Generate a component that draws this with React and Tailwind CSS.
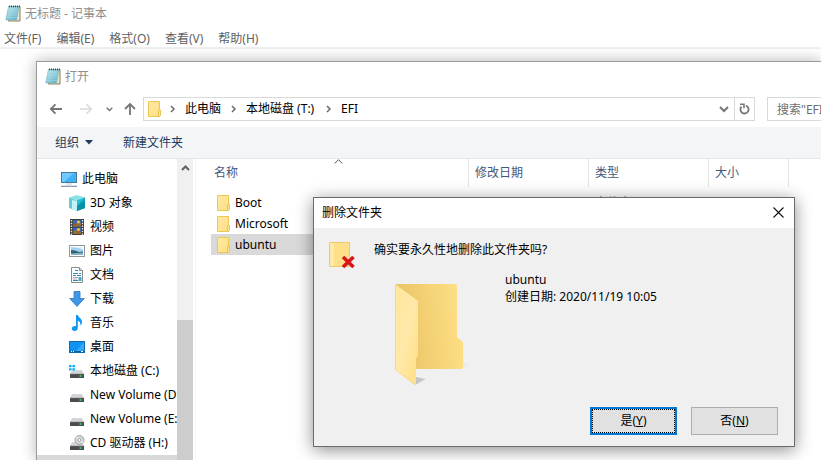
import React from "react";

function NotepadIcon() {
  return (
    <svg width="16" height="17" viewBox="0 0 16 17" className="shrink-0" aria-hidden="true">
      <defs>
        <linearGradient id="pad" x1="0" y1="0" x2="1" y2="1">
          <stop offset="0" stopColor="#c9eaf0" />
          <stop offset="1" stopColor="#57adc2" />
        </linearGradient>
      </defs>
      <path d="M4.5 1.500H15V16H3.500z" fill="#e9e2cf" stroke="#8d7c50" />
      <path d="M3.500 1.500h10.500L11.500 15H.8z" fill="url(#pad)" stroke="#6fb4c6" strokeWidth=".6" />
      <path d="M3.200 5h9.800M2.700 7.500h9.800M2.300 10h9.700M1.800 12.500h9.800" stroke="#a6dbe5" strokeWidth=".5" />
      <path d="M4.500.5v1.800M6.500.5v1.800M8.500.5v1.800M10.500.5v1.800M12.500.5v1.800M14.500.5v1.800" stroke="#3f4a50" />
    </svg>
  );
}

function FolderIcon() {
  return (
    <svg width="14" height="16" viewBox="0 0 14 16" className="shrink-0" aria-hidden="true">
      <defs>
        <linearGradient id="fold" x1="0" y1="0" x2="1" y2="1">
          <stop offset="0" stopColor="#ffe9a6" />
          <stop offset="1" stopColor="#ffdf82" />
        </linearGradient>
      </defs>
      <path d="M1.500.5h11v15h-11z" fill="url(#fold)" stroke="#ecc850" />
      <path d="M11.500 15.500V10l1-1h1v5.500l-1 1z" fill="#ffe596" stroke="#e3bb43" strokeWidth=".8" />
    </svg>
  );
}

function PcIcon() {
  return (
    <svg width="18" height="16" viewBox="0 0 18 16" aria-hidden="true">
      <rect x="1.500" y="1.500" width="15" height="10" fill="#3fb1f5" stroke="#4a7896" />
      <path d="M2 2h12L4 11H2z" fill="#71caff" />
      <path d="M6 13h6" stroke="#c3d0db" />
      <path d="M1 15.300h16" stroke="#8094aa" strokeWidth="1.200" />
    </svg>
  );
}

function ObjectsIcon() {
  return (
    <svg width="16" height="16" viewBox="0 0 16 16" aria-hidden="true">
      <path d="M8 0l8 2.500-8 3-8-3z" fill="#8fdfe6" />
      <path d="M0 2.500l8 3V16l-8-3z" fill="#66cbd4" />
      <path d="M3 5l5 1v10l-5-2z" fill="#c4f1f3" />
      <path d="M16 2.500l-8 3V16l8-3z" fill="#13a3ba" />
      <path d="M16 2.500L8 5.500V11z" fill="#23c2d8" />
      <path d="M8 11l8-5v7l-8 3z" fill="#0a91a8" />
    </svg>
  );
}

function VideoIcon() {
  return (
    <svg width="16" height="16" viewBox="0 0 16 16" aria-hidden="true">
      <path d="M1 0h14v16H1z" fill="#3a3a3a" />
      <path d="M2.500 1v15M13.500 1v15" stroke="#e6e6e6" strokeWidth="1.400" strokeDasharray="1.500 1.200" />
      <path d="M4 1h8v6.500H4zM4 8.500h8V15H4z" fill="#3b63b5" />
      <path d="M4 6l3-2 2 1 3-1v3.500H4zM4 13l3-2 5 2v2H4z" fill="#8d7030" />
      <circle cx="9.500" cy="3" r="1.600" fill="#f1c232" />
      <circle cx="9.500" cy="10.500" r="1.600" fill="#f1c232" />
      <path d="M5 5.500h2M8 13h2" stroke="#c83832" strokeWidth="1.200" />
    </svg>
  );
}

function PictureIcon() {
  return (
    <svg width="16" height="16" viewBox="0 0 16 16" aria-hidden="true">
      <rect x=".5" y="2.500" width="15" height="11" fill="#fff" stroke="#969696" />
      <path d="M2 4h12v8H2z" fill="#9fd1f2" />
      <path d="M2 4h12v2.500L9 5z" fill="#e8f4fb" />
      <path d="M2 7l4 .5L10 9l4-.5V12H2z" fill="#35616b" />
      <path d="M2 10.500l12-1V12H2z" fill="#7fb2cf" />
    </svg>
  );
}

function DocumentIcon() {
  return (
    <svg width="16" height="16" viewBox="0 0 16 16" aria-hidden="true">
      <path d="M2.500.5h8l3 3v12h-11z" fill="#fff" stroke="#8c8c8c" />
      <path d="M10.500.5v3h3" fill="#dcdcdc" stroke="#8c8c8c" />
      <path d="M6 3.500h3M4 6.500h5M10 6.500h2M4 8.500h3M8 8.500h4M4 13.500h5" stroke="#2589bd" />
      <path d="M4 10.500h5M4 12h4" stroke="#9b9b9b" strokeWidth=".8" />
      <path d="M9.500 10h3v4h-3z" fill="#4aa6c6" />
    </svg>
  );
}

function DownloadIcon() {
  return (
    <svg width="16" height="16" viewBox="0 0 16 16" aria-hidden="true">
      <path d="M5 .5h6V7.500h4.300L8 15.400.7 7.500H5z" fill="#3f98e6" stroke="#2c78bd" strokeWidth=".8" />
    </svg>
  );
}

function MusicIcon() {
  return (
    <svg width="16" height="16" viewBox="0 0 16 16" aria-hidden="true">
      <path
        d="M7 0h1.800c.2 2.400 4.200 3.200 4.200 7.200 0 1.600-.7 2.700-1.600 3.500.5-2.200-.3-4.400-2.600-5V13c0 1.800-1.500 3-3.200 3S2.800 15 2.800 13.600 4.200 11 5.800 11c.5 0 .9.100 1.200.200z"
        fill="#0d97f2"
      />
    </svg>
  );
}

function DesktopIcon() {
  return (
    <svg width="16" height="16" viewBox="0 0 16 16" aria-hidden="true">
      <rect x=".5" y="2.500" width="15" height="11" fill="#0f93f2" stroke="#116ba8" />
      <path d="M15 3v8L6 13z" fill="#34a9fb" />
      <path d="M1 12.500h14" stroke="#0a5f9b" />
      <path d="M2 12.500h1M4 12.500h1M12 12.500h2" stroke="#fff" />
    </svg>
  );
}

function DriveBody() {
  return (
    <>
      <path d="M3 7h10l2 4H1z" fill="#d3d5d8" />
      <path d="M1 11h14v4H1z" fill="#4a4c4f" />
      <path d="M1 10.700h14" stroke="#a8abae" strokeWidth=".7" />
      <path d="M10.500 13h2" stroke="#3fe05a" strokeWidth="1.500" />
    </>
  );
}

function SystemDriveIcon() {
  return (
    <svg width="16" height="16" viewBox="0 0 16 16" aria-hidden="true">
      <DriveBody />
      <path d="M0 2h2.600v2.300H0zM3.400 2H6v2.300H3.400zM0 5.200h2.600v2.300H0zM3.400 5.200H6v2.300H3.400z" fill="#13b2ee" />
    </svg>
  );
}

function DriveIcon() {
  return (
    <svg width="16" height="16" viewBox="0 0 16 16" aria-hidden="true">
      <DriveBody />
    </svg>
  );
}

function DiscDriveIcon() {
  return (
    <svg width="16" height="16" viewBox="0 0 16 16" aria-hidden="true">
      <DriveBody />
      <circle cx="10.500" cy="5" r="4.500" fill="#d7dbd9" stroke="#8d9191" strokeWidth=".8" />
      <path d="M10.500 5L7 2.200M10.500 5l3.500 2.700" stroke="#f6f6f6" />
      <circle cx="10.500" cy="5" r="1.500" fill="#fff" stroke="#8d9191" strokeWidth=".8" />
    </svg>
  );
}

function Crumb() {
  return (
    <svg width="6" height="8" viewBox="0 0 6 8" className="shrink-0" aria-hidden="true">
      <path d="M1 1l3 3-3 3" fill="none" stroke="#6a6a6a" strokeWidth="1.500" />
    </svg>
  );
}

function DeleteFolderIcon() {
  return (
    <svg width="27" height="28" viewBox="0 0 27 28" className="shrink-0" aria-hidden="true">
      <path d="M.5 1.500h20v24H.5z" fill="#ffe08a" stroke="#eccb6b" />
      <path d="M1 2h2.500v23H1z" fill="#ffe9a8" />
      <path d="M4 2v23" stroke="#fff0c0" />
      <path d="M14 16l10.500 10M24.500 16L14 26" stroke="#d8141c" strokeWidth="3.600" />
    </svg>
  );
}

function BigFolder() {
  return (
    <svg width="76" height="104" viewBox="0 0 76 104" className="shrink-0" aria-hidden="true">
      <defs>
        <linearGradient id="bf-back" x1="0" y1=".5" x2="1" y2=".35">
          <stop offset="0" stopColor="#e8c263" />
          <stop offset="1" stopColor="#ffe086" />
        </linearGradient>
        <linearGradient id="bf-front" x1="0" y1="0" x2="1" y2="1">
          <stop offset="0" stopColor="#ffe69b" />
          <stop offset=".5" stopColor="#ffe9a9" />
          <stop offset="1" stopColor="#ffdf84" />
        </linearGradient>
        <linearGradient id="bf-shade" x1="0" y1="0" x2="1" y2="0">
          <stop offset="0" stopColor="#c2c2c2" />
          <stop offset="1" stopColor="#f0f0f0" />
        </linearGradient>
      </defs>
      <path d="M20 102l11-6-10-2zM66 86l10-4-9-3z" fill="url(#bf-shade)" />
      <path d="M0 1h60q2 0 2 2v51l6 5v25q0 2-2 2H0z" fill="url(#bf-back)" />
      <path d="M0 1l23 17v54l-2 4v26.500L0 87z" fill="url(#bf-front)" />
      <path d="M.5 2v84.500L20.500 102" fill="none" stroke="#f0d07a" strokeWidth=".6" />
    </svg>
  );
}

const menus = ["文件(F)", "编辑(E)", "格式(O)", "查看(V)", "帮助(H)"];

const places = [
  ["3D 对象", ObjectsIcon],
  ["视频", VideoIcon],
  ["图片", PictureIcon],
  ["文档", DocumentIcon],
  ["下载", DownloadIcon],
  ["音乐", MusicIcon],
  ["桌面", DesktopIcon],
  ["本地磁盘 (C:)", SystemDriveIcon],
  ["New Volume (D:)", DriveIcon],
  ["New Volume (E:)", DriveIcon],
  ["CD 驱动器 (H:)", DiscDriveIcon],
];

function AddressRow() {
  return (
    <div className="flex h-9 items-center">
      <div className="flex w-[106px] shrink-0 items-center pl-3">
        <button aria-label="后退" className="flex w-[30px] shrink-0">
          <svg width="14" height="12" viewBox="0 0 14 12">
            <path d="M13 6H2M6.500 1.300L1.800 6l4.700 4.700" fill="none" stroke="#767676" strokeWidth="1.800" />
          </svg>
        </button>
        <button aria-label="前进" className="flex w-[27px] shrink-0">
          <svg width="14" height="12" viewBox="0 0 14 12">
            <path d="M1 6h11M7.500 1.300L12.200 6l-4.700 4.700" fill="none" stroke="#d9d9d9" strokeWidth="1.500" />
          </svg>
        </button>
        <button aria-label="最近浏览的位置" className="flex w-[18px] shrink-0">
          <svg width="7" height="5" viewBox="0 0 7 5">
            <path d="M.7.7l2.800 2.800L6.300.7" fill="none" stroke="#767676" strokeWidth="1.500" />
          </svg>
        </button>
        <button aria-label="向上" className="flex shrink-0">
          <svg width="12" height="14" viewBox="0 0 12 14">
            <path d="M6 13V2M1 7l5-5 5 5" fill="none" stroke="#767676" strokeWidth="1.800" />
          </svg>
        </button>
      </div>
      <div className="flex h-6 min-w-0 flex-1 border border-[#d9d9d9]">
        <nav aria-label="地址" className="flex min-w-0 flex-1 items-center pl-[3px]">
          <FolderIcon />
          <span className="flex w-6 justify-center"><Crumb /></span>
          <button className="w-[37px] text-left whitespace-nowrap">此电脑</button>
          <span className="flex w-6 justify-center"><Crumb /></span>
          <button className="w-[71px] text-left whitespace-nowrap">本地磁盘 (T:)</button>
          <span className="flex w-6 justify-center"><Crumb /></span>
          <button className="text-left">EFI</button>
        </nav>
        <button aria-label="上一个位置" className="flex w-5 items-center justify-center">
          <svg width="10" height="7" viewBox="0 0 10 7">
            <path d="M1 1l4 4 4-4" fill="none" stroke="#767676" strokeWidth="2" />
          </svg>
        </button>
        <button aria-label="刷新" className="flex w-5 items-center justify-center border-l border-[#d9d9d9]">
          <svg width="11" height="12" viewBox="0 0 11 12">
            <path d="M2.500 3.600A4.100 4.100 0 1 0 7 2.600" fill="none" stroke="#767676" strokeWidth="1.800" />
            <path d="M1 1.200h4v4" fill="none" stroke="#767676" strokeWidth="1.600" />
          </svg>
        </button>
      </div>
      <div className="ml-3 h-6 w-[54px] shrink-0 border border-r-0 border-[#d9d9d9]">
        <input
          type="search"
          aria-label="搜索"
          placeholder={'搜索"EFI"'}
          className="block h-full w-[160px] bg-transparent pl-[9px] outline-none placeholder:text-[#6d6d6d]"
        />
      </div>
    </div>
  );
}

function Sidebar() {
  return (
    <div className="flex w-[156px] shrink-0">
      <nav aria-label="导航窗格" className="min-w-0 flex-1 overflow-hidden pt-2">
        <button className="flex h-6 w-full items-center gap-1 pl-[23px] text-left whitespace-nowrap">
          <PcIcon />
          此电脑
        </button>
        <ul>
          {places.map(([name, Icon]) => (
            <li key={name}>
              <button className="flex h-6 items-center gap-[5px] pl-8 text-left whitespace-nowrap">
                <span className="shrink-0"><Icon /></span>
                {name}
              </button>
            </li>
          ))}
          <li className="h-6 bg-[#d9d9d9]" />
        </ul>
      </nav>
      <div className="flex w-4 shrink-0 flex-col bg-[#f0f0f0]">
        <button aria-label="向上滚动" className="flex h-[18px] items-center justify-center">
          <svg width="9" height="6" viewBox="0 0 9 6">
            <path d="M1 5l3.500-3.500L8 5" fill="none" stroke="#606060" strokeWidth="2" />
          </svg>
        </button>
        <div className="mt-[143px] flex-1 bg-[#cdcdcd]" />
      </div>
    </div>
  );
}

function FileList() {
  const head = "h-7 border-r border-[#e2e2e2] text-left font-normal text-[#43597c]";
  return (
    <div className="ml-[2px] min-w-0 flex-1 overflow-hidden border-l border-[#f5f5f5] pl-[15px]">
      <table className="w-[578px] table-fixed border-collapse">
        <thead>
          <tr>
            <th className="w-[258px] p-0 pb-[5px]">
              <div className={`${head} relative flex items-center pl-[3px]`}>
                名称
                <svg width="9" height="5" viewBox="0 0 9 5" className="absolute top-0 left-[123px]">
                  <path d="M.7 4.500l3.800-3.800 3.800 3.800" fill="none" stroke="#555" />
                </svg>
              </div>
            </th>
            <th className="w-[120px] p-0 pb-[5px]">
              <div className={`${head} flex items-center pl-[6px]`}>修改日期</div>
            </th>
            <th className="w-[120px] p-0 pb-[5px]">
              <div className={`${head} flex items-center pl-[6px]`}>类型</div>
            </th>
            <th className="w-[80px] p-0 pb-[5px]">
              <div className={`${head} flex items-center pl-[6px]`}>大小</div>
            </th>
          </tr>
        </thead>
        <tbody>
          {["Boot", "Microsoft", "ubuntu"].map((name) => (
            <tr key={name} className={name === "ubuntu" ? "bg-[#d9d9d9]" : ""}>
              <td className="p-0">
                <div className="flex h-[21px] items-center gap-[5px] pl-[5px]">
                  <FolderIcon />
                  {name}
                </div>
              </td>
              <td className="p-0" />
              <td className="p-0 pt-px pl-[6px] text-[#6d6d6d]">文件夹</td>
              <td className="p-0" />
            </tr>
          ))}
        </tbody>
      </table>
    </div>
  );
}

function OpenDialog() {
  return (
    <section
      aria-label="打开"
      className="absolute top-[61px] right-0 bottom-0 left-9 flex flex-col border-t border-l border-[#9b9b9b] bg-white shadow-[0_0_14px_rgba(0,0,0,0.3)]"
    >
      <header className="flex h-[29px] items-center gap-1 pl-2 text-[#8f8f8f]">
        <NotepadIcon />
        <h2>打开</h2>
      </header>
      <AddressRow />
      <div className="flex h-8 items-center border-b border-[#e5e7ea] bg-[#f4f5f7] pl-[18px] text-[#1e395b]">
        <button className="flex items-center gap-[6px]">
          组织
          <svg width="8" height="5" viewBox="0 0 8 5" aria-hidden="true">
            <path d="M0 0h8L4 4.500z" fill="#1e395b" />
          </svg>
        </button>
        <button className="ml-[30px]">新建文件夹</button>
      </div>
      <div className="flex min-h-0 flex-1 overflow-hidden">
        <Sidebar />
        <FileList />
      </div>
    </section>
  );
}

function DeleteDialog() {
  return (
    <section
      role="dialog"
      aria-label="删除文件夹"
      className="absolute top-[197px] left-[313px] flex h-[250px] w-[482px] flex-col border border-[#6b6b6b] bg-[#f0f0f0] shadow-[0_3px_16px_rgba(0,0,0,0.45)]"
    >
      <header className="flex h-[30px] items-center justify-between bg-white pr-[10px] pl-2">
        <h2>删除文件夹</h2>
        <button aria-label="关闭" className="pb-px">
          <svg width="11" height="11" viewBox="0 0 11 11" className="block">
            <path d="M.5.5l10 10M10.500.5l-10 10" stroke="#111" strokeWidth="1.100" />
          </svg>
        </button>
      </header>
      <div className="flex flex-1 pt-[13px] pl-[15px]">
        <DeleteFolderIcon />
        <div className="pt-px pl-[18px]">
          <p className="leading-4">确实要永久性地删除此文件夹吗?</p>
          <div className="flex gap-[34px] pt-[25px] pl-[21px]">
            <BigFolder />
            <div className="-mt-3 leading-[17px]">
              <p>ubuntu</p>
              <p>创建日期: 2020/11/19 10:05</p>
            </div>
          </div>
        </div>
      </div>
      <footer className="flex justify-end gap-[14px] pr-4 pb-[11px]">
        <button className="h-7 w-[87px] border-2 border-[#0078d7] bg-[#e1e1e1]">
          <span className="flex h-full items-center justify-center border border-dotted border-black">
            是(<u>Y</u>)
          </span>
        </button>
        <button className="h-7 w-[87px] border border-[#adadad] bg-[#e1e1e1]">
          否(<u>N</u>)
        </button>
      </footer>
    </section>
  );
}

export default function App() {
  return (
    <main className="relative h-screen overflow-hidden bg-white font-['Noto_Sans','Noto_Sans_CJK_SC',sans-serif] text-[12px] leading-4 text-black">
      <header className="flex h-[27px] items-center gap-1 pl-[5px] text-[#8f8f8f]">
        <NotepadIcon />
        <h1>无标题 - 记事本</h1>
      </header>
      <nav aria-label="菜单栏" className="flex h-[22px] items-end gap-[15px] border-b-2 border-[#f0f0f0] pl-1 text-[#5f5f5f]">
        {menus.map((m) => (
          <button key={m} className="whitespace-nowrap">{m}</button>
        ))}
      </nav>
      <OpenDialog />
      <DeleteDialog />
    </main>
  );
}
